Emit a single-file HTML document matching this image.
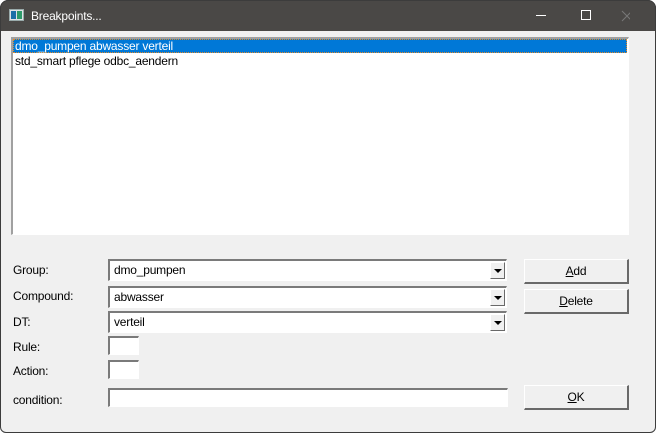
<!DOCTYPE html>
<html><head><meta charset="utf-8"><style>
*{margin:0;padding:0;box-sizing:border-box}
html,body{width:656px;height:433px;background:#fff;overflow:hidden;font-family:"Liberation Sans",Arial,sans-serif;font-size:12px;color:#000;letter-spacing:-0.2px}
.win{position:absolute;left:0;top:0;width:656px;height:433px;background:#f0f0f0;border-radius:8px 8px 6px 6px;overflow:hidden}
.frame{position:absolute;left:0;top:0;width:656px;height:433px;border:1px solid #3c3c3c;border-radius:8px 8px 6px 6px;pointer-events:none}
.title{position:absolute;left:0;top:0;width:656px;height:31px;background:#4a4846;color:#fff}
.title .t{position:absolute;left:31px;top:9px;font-size:12px}
.ic{position:absolute;left:9px;top:9px;width:15px;height:12px;background:#dfe3e6;border:1px solid #9aa}
.ic:before{content:"";position:absolute;left:1px;top:1px;width:5px;height:8px;background:#1b6fa8}
.ic:after{content:"";position:absolute;left:7px;top:1px;width:5px;height:8px;background:#2e9a6a}
.ab{position:absolute}
.sunk{position:absolute;background:#fff;border-top:2px solid #a0a0a0;border-left:2px solid #a0a0a0;border-right:1px solid #fff;border-bottom:1px solid #fff}
.combo{position:absolute;left:108px;width:399px;height:22px;background:#fff;border-top:2px solid #7a7a7a;border-left:2px solid #7a7a7a;border-right:1px solid #fff;border-bottom:1px solid #fff}
.combo span{position:absolute;left:4px;top:2px}
.dd{position:absolute;right:1px;top:1px;width:15px;height:17px;background:#f0f0f0;border-top:1px solid #fff;border-left:1px solid #fff;border-right:1px solid #696969;border-bottom:1px solid #696969}
.dd:after{content:"";position:absolute;left:3px;top:6px;border-left:4px solid transparent;border-right:4px solid transparent;border-top:4px solid #000}
.lbl{position:absolute;left:13px}
.btn{position:absolute;left:524px;width:105px;height:25px;background:#f0f0f0;border-top:1px solid #fff;border-left:1px solid #fff;border-right:2px solid #696969;border-bottom:2px solid #696969;text-align:center;line-height:22px}
.sm{position:absolute;left:108px;width:31px;height:19px;background:#fff;border-top:2px solid #7a7a7a;border-left:2px solid #7a7a7a;border-right:1px solid #fff;border-bottom:1px solid #fff}
</style></head><body><div class="win">
<div class="title"><div class="ic"></div><div class="t">Breakpoints...</div>
<svg class="ab" style="left:530px;top:8px" width="100" height="16"><line x1="6" y1="7.5" x2="16" y2="7.5" stroke="#fff"/><rect x="51.5" y="2.5" width="9" height="9" fill="none" stroke="#fff"/><path d="M92 3 L102 13 M102 3 L92 13" stroke="#777"/></svg></div>
<div class="sunk" style="left:11px;top:37px;width:618px;height:198px">
<div class="ab" style="left:0;top:0;width:614px;height:14px;background:#0078d7;outline:1px dotted #e08a2a;outline-offset:-1px;color:#fff;padding-left:2px;line-height:14px">dmo_pumpen abwasser verteil</div>
<div class="ab" style="left:2px;top:15px;line-height:14px">std_smart pflege odbc_aendern</div></div>
<div class="lbl" style="top:263px">Group:</div>
<div class="lbl" style="top:289px">Compound:</div>
<div class="lbl" style="top:315px">DT:</div>
<div class="lbl" style="top:340px">Rule:</div>
<div class="lbl" style="top:364px">Action:</div>
<div class="lbl" style="top:393px">condition:</div>
<div class="combo" style="top:259px"><span>dmo_pumpen</span><div class="dd"></div></div>
<div class="combo" style="top:286px"><span>abwasser</span><div class="dd"></div></div>
<div class="combo" style="top:311px"><span>verteil</span><div class="dd"></div></div>
<div class="sm" style="top:336px"></div>
<div class="sm" style="top:360px"></div>
<div class="sm" style="top:388px;width:400px"></div>
<div class="btn" style="top:259px"><u>A</u>dd</div>
<div class="btn" style="top:289px"><u>D</u>elete</div>
<div class="btn" style="top:385px"><u>O</u>K</div>
</div><div class="frame"></div></body></html>
